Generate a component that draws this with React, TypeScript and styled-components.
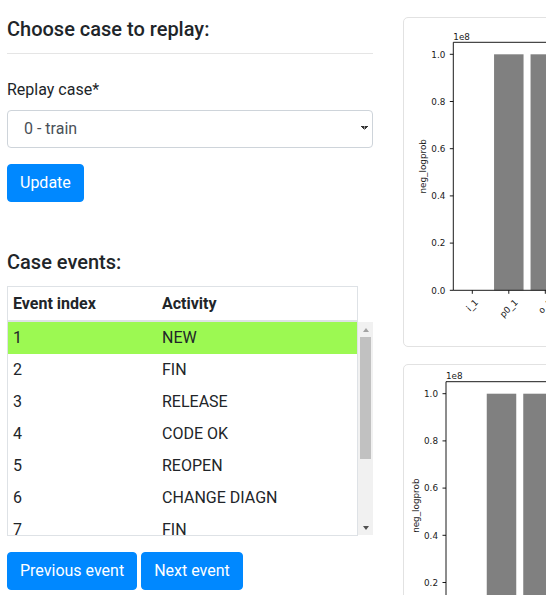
import React from 'react';
import styled, { createGlobalStyle } from 'styled-components';

const GlobalStyle = createGlobalStyle`
  html, body { margin: 0; padding: 0; overflow: hidden; background: #fff; }
  body {
    font-family: Roboto, "Liberation Sans", Arial, sans-serif;
    font-size: 16px;
    line-height: 1.5;
    color: #212529;
  }
  *, *::before, *::after { box-sizing: border-box; }
`;

const Page = styled.div`
  display: flex;
  align-items: flex-start;
  gap: 30px;
  padding: 17px 0 0 7px;
  width: max-content;
`;

const LeftCol = styled.div`
  width: 366px;
  flex: none;
`;

const Heading = styled.h5<{ $mt?: number }>`
  margin: ${(p) => p.$mt ?? 0}px 0 0;
  font-size: 20px;
  font-weight: 500;
  line-height: 24px;
  color: #212529;
`;

const Rule = styled.hr`
  margin: 12px 0 24px;
  border: 0;
  border-top: 1px solid rgba(0, 0, 0, 0.1);
`;

const Label = styled.label`
  display: block;
  margin-bottom: 8px;
  font-size: 16px;
  line-height: 24px;
`;

const Select = styled.select`
  display: block;
  width: 100%;
  height: 38px;
  padding: 6px 24px 6px 16px;
  font: 400 16px/1.5 Roboto, "Liberation Sans", sans-serif;
  color: #495057;
  border: 1px solid #ced4da;
  border-radius: 4px;
  appearance: none;
  -webkit-appearance: none;
  background:
    linear-gradient(to top right, transparent 50%, #333 50%) 353px 15px / 3.5px 4px no-repeat,
    linear-gradient(to top left, transparent 50%, #333 50%) 356.5px 15px / 3.5px 4px no-repeat,
    #fff;
`;

const ButtonRow = styled.div<{ $mt: number }>`
  display: flex;
  gap: 4px;
  margin-top: ${(p) => p.$mt}px;
`;

const Button = styled.button`
  display: inline-block;
  padding: 6px 12px;
  font: 400 16px/24px Roboto, "Liberation Sans", sans-serif;
  color: #fff;
  background: #0088ff;
  border: 1px solid #0088ff;
  border-radius: 4px;
  cursor: pointer;
`;

const TableFrame = styled.div`
  width: 351px;
  margin-top: 12px;
  border: 1px solid #dee2e6;
`;

const HeadTable = styled.table`
  width: 100%;
  border-collapse: collapse;
  table-layout: fixed;
`;

const HeadCell = styled.th<{ $w?: number }>`
  width: ${(p) => (p.$w ? `${p.$w}px` : 'auto')};
  padding: 4.5px 5px;
  text-align: left;
  font-weight: 700;
  line-height: 24px;
  border-bottom: 2px solid #dee2e6;
`;

const BodyArea = styled.div`
  display: flex;
  height: 213px;
  margin-right: -16px;
`;

const ScrollView = styled.div`
  width: 350px;
  flex: none;
  overflow-y: auto;
  overflow-x: hidden;
  scrollbar-width: none;
  &::-webkit-scrollbar { display: none; }
`;

const ScrollRail = styled.div`
  width: 15px;
  flex: none;
  display: flex;
  flex-direction: column;
  background: #f1f1f1;
`;

const RailButton = styled.div`
  height: 15px;
  flex: none;
  display: flex;
  align-items: center;
  justify-content: center;
`;

const Arrow = styled.span<{ $dir: 'up' | 'down'; $color: string }>`
  width: 0;
  height: 0;
  border-left: 3.5px solid transparent;
  border-right: 3.5px solid transparent;
  ${(p) =>
    p.$dir === 'up'
      ? `border-bottom: 4px solid ${p.$color};`
      : `border-top: 4px solid ${p.$color};`}
`;

const RailTrack = styled.div`
  flex: 1;
`;

const Thumb = styled.div`
  height: 122px;
  margin: 0 2px;
  background: #c1c1c1;
`;

const BodyTable = styled.table`
  width: 349px;
  border-collapse: collapse;
  table-layout: fixed;
`;

const Row = styled.tr<{ $active?: boolean }>`
  background: ${(p) => (p.$active ? '#9cf952' : 'transparent')};
`;

const Cell = styled.td<{ $w?: number }>`
  width: ${(p) => (p.$w ? `${p.$w}px` : 'auto')};
  padding: 4px 5px;
  line-height: 24px;
  white-space: nowrap;
`;

const RightCol = styled.div`
  display: flex;
  flex-direction: column;
  gap: 17px;
  flex: none;
`;

const Card = styled.div`
  width: 220px;
  height: 330px;
  border: 1px solid #e2e2e2;
  border-radius: 5px;
  background: #fff;
  overflow: hidden;
`;

const ChartSvg = styled.svg`
  display: block;
  font-family: "DejaVu Sans", sans-serif;
`;

const events = [
  'NEW',
  'FIN',
  'RELEASE',
  'CODE OK',
  'REOPEN',
  'CHANGE DIAGN',
  'FIN',
  'RELEASE',
  'CODE OK',
  'BILLED',
];

const cats = ['i_1', 'p0_1', 'o_1'];
const values = [0, 1, 1];

function Chart({ dx, dy }: { dx: number; dy: number }) {
  const L = 50.3 + dx;
  const T = 25.3 + dy;
  const B = 273.3 + dy;
  const unit = 236;
  const pitch = 36.5;
  const first = L + 19;
  const R = L + 3.08 * pitch;
  const fs = 8.8;
  const charW: Record<string, number> = { i: 0.278, _: 0.5, '1': 0.636, p: 0.635, '0': 0.636, o: 0.612 };
  const textW = (s: string) => s.split('').reduce((a, c) => a + (charW[c] ?? 0.6), 0) * fs;
  const h = 1.166 * fs;
  const yTicks = [0, 0.2, 0.4, 0.6, 0.8, 1.0];
  return (
    <ChartSvg width={218} height={328} viewBox="1 1 218 328">
      {values.map((v, i) =>
        v > 0 ? (
          <rect
            key={`b${i}`}
            x={first + i * pitch - 14.75}
            y={B - v * unit}
            width={29.5}
            height={v * unit}
            fill="#808080"
          />
        ) : null
      )}
      <g stroke="#000" strokeWidth={0.9} fill="none">
        <line x1={L} y1={T} x2={L} y2={B} />
        <line x1={L} y1={B} x2={R} y2={B} />
        <line x1={L} y1={T} x2={R} y2={T} />
        <line x1={R} y1={T} x2={R} y2={B} />
        {yTicks.map((t) => (
          <line key={`yt${t}`} x1={L - 3.5} y1={B - t * unit} x2={L} y2={B - t * unit} />
        ))}
        {cats.map((c, i) => (
          <line key={`xt${c}`} x1={first + i * pitch} y1={B} x2={first + i * pitch} y2={B + 3.5} />
        ))}
      </g>
      <g fill="#1a1a1a" fontSize={fs}>
        {yTicks.map((t) => (
          <text key={`yl${t}`} x={L - 8} y={B - t * unit + 3.2} textAnchor="end">
            {t.toFixed(1)}
          </text>
        ))}
        <text x={L} y={T - 2.4}>1e8</text>
        <text
          x={L - 30.3}
          y={(T + B) / 2}
          textAnchor="middle"
          dominantBaseline="central"
          transform={`rotate(-90 ${L - 30.3} ${(T + B) / 2})`}
        >
          neg_logprob
        </text>
        {cats.map((c, i) => {
          const cx = first + i * pitch;
          const ext = (textW(c) + h) * 0.707;
          const cy = B + 7 + ext / 2;
          return (
            <text
              key={`xl${c}`}
              x={cx}
              y={cy}
              textAnchor="middle"
              dominantBaseline="central"
              transform={`rotate(-45 ${cx} ${cy})`}
            >
              {c}
            </text>
          );
        })}
      </g>
    </ChartSvg>
  );
}

export default function App() {
  return (
    <>
      <GlobalStyle />
      <Page>
        <LeftCol>
          <Heading>Choose case to replay:</Heading>
          <Rule />
          <Label htmlFor="replay-case">Replay case*</Label>
          <Select id="replay-case" defaultValue="0">
            <option value="0">0 - train</option>
            <option value="1">1 - train</option>
            <option value="2">2 - test</option>
          </Select>
          <ButtonRow $mt={16}>
            <Button type="button">Update</Button>
          </ButtonRow>

          <Heading $mt={48}>Case events:</Heading>
          <TableFrame>
            <HeadTable>
              <thead>
                <tr>
                  <HeadCell $w={149}>Event index</HeadCell>
                  <HeadCell>Activity</HeadCell>
                </tr>
              </thead>
            </HeadTable>
            <BodyArea>
              <ScrollView>
                <BodyTable>
                  <tbody>
                    {events.map((a, i) => (
                      <Row key={i} $active={i === 0}>
                        <Cell $w={149}>{i + 1}</Cell>
                        <Cell>{a}</Cell>
                      </Row>
                    ))}
                  </tbody>
                </BodyTable>
              </ScrollView>
              <ScrollRail aria-hidden="true">
                <RailButton>
                  <Arrow $dir="up" $color="#a3a3a3" />
                </RailButton>
                <RailTrack>
                  <Thumb />
                </RailTrack>
                <RailButton>
                  <Arrow $dir="down" $color="#505050" />
                </RailButton>
              </ScrollRail>
            </BodyArea>
          </TableFrame>
          <ButtonRow $mt={16}>
            <Button type="button">Previous event</Button>
            <Button type="button">Next event</Button>
          </ButtonRow>
        </LeftCol>
        <RightCol>
          <Card>
            <Chart dx={0} dy={0} />
          </Card>
          <Card>
            <Chart dx={-7.3} dy={-7.6} />
          </Card>
        </RightCol>
      </Page>
    </>
  );
}
